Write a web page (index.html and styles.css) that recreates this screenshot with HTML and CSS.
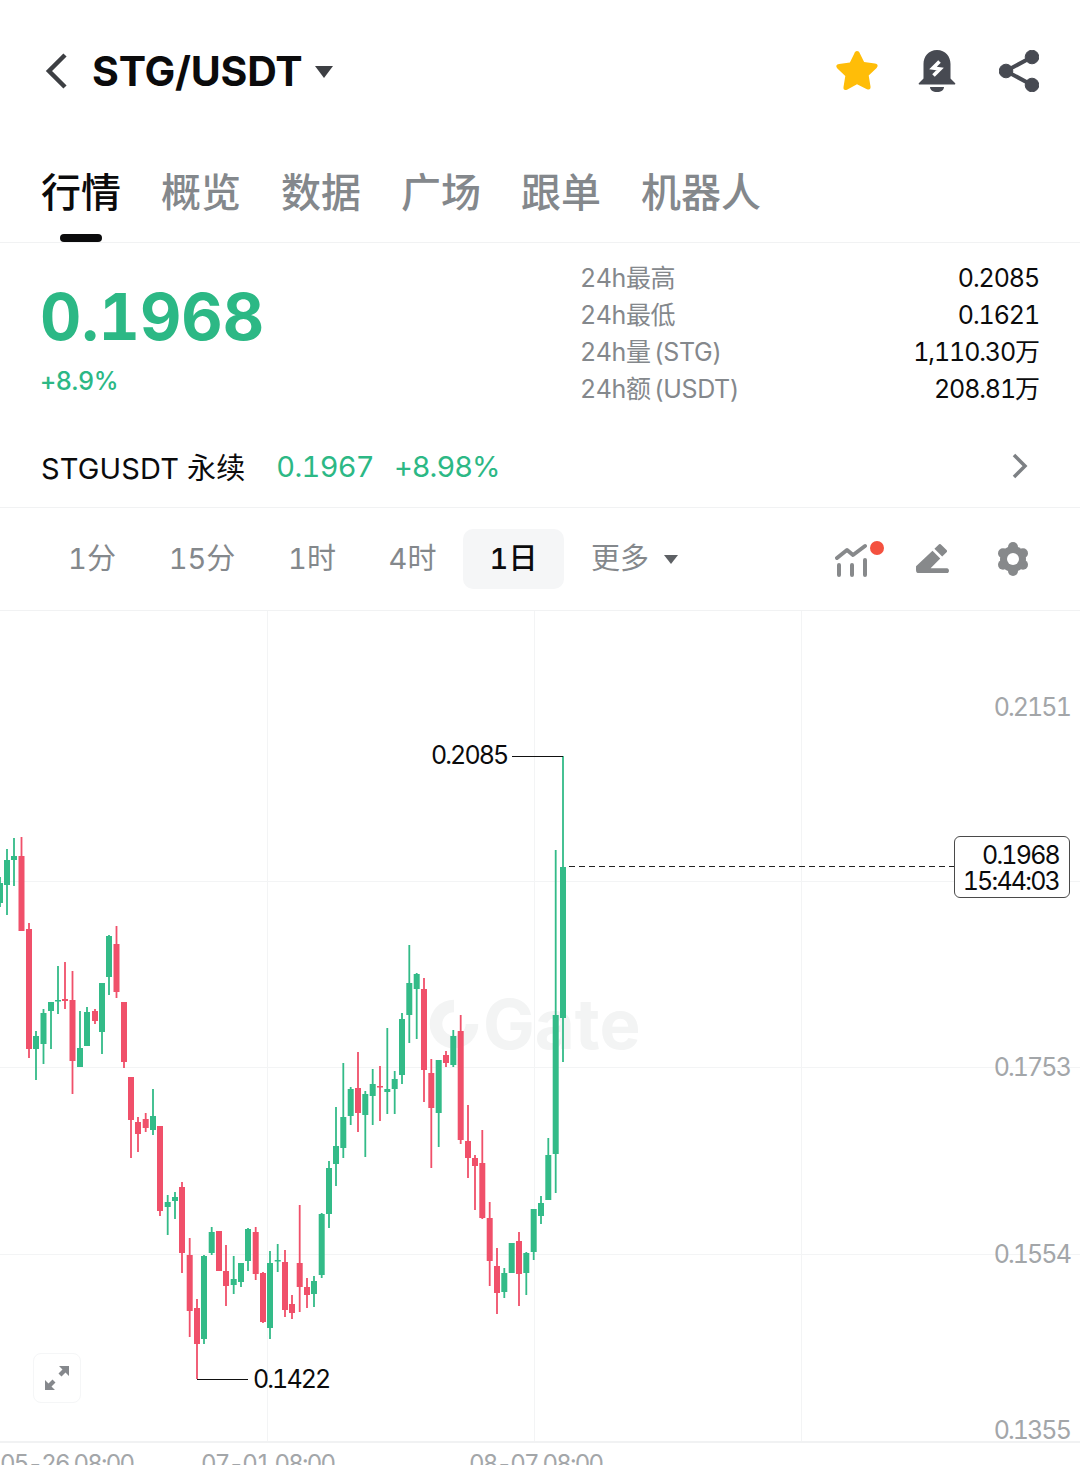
FILE: index.html
```html
<!DOCTYPE html>
<html lang="zh">
<head>
<meta charset="utf-8">
<title>STG/USDT</title>
<link rel="stylesheet" href="styles.css">
</head>
<body>
<div class="page">
  <header class="topbar">
    <div class="pair">
      <svg class="back" viewBox="0 0 24 38"><path d="M21 3 5 19l16 16" /></svg>
      <h1 class="pair-name">STG/USDT</h1>
      <svg class="pair-caret" viewBox="0 0 20 14"><path d="M1 1h18L10 13z"/></svg>
    </div>
    <div class="top-icons">
      <svg class="ic-star" viewBox="0 0 44 42"><path d="M22 1c1.400 0 2.200.9 2.800 2.200l4.300 8.800 10.800 1.600c2.800.4 3.600 2.400 1.700 4.300l-7.900 7.700 1.800 11c.4 2.600-1.300 3.700-3.500 2.600L22 34.300l-10 5.400c-2.200 1.100-3.900 0-3.500-2.600l1.800-11-7.900-7.700c-1.900-1.900-1.100-3.900 1.700-4.300l10.800-1.600 4.300-8.800C19.800 1.900 20.600 1 22 1z"/></svg>
      <svg class="ic-bell" viewBox="0 0 38 42"><path d="M19 0c8.500 0 13.500 6.500 13.500 14v14.500L37 33c.7.800.3 1.500-.7 1.500H1.700c-1 0-1.400-.7-.7-1.500l4.500-4.500V14C5.500 6.500 10.500 0 19 0z"/><path class="bolt" d="M21.500 11.500 15 18l7 1-6.500 6.500"/><path d="M12 37h14c0 3-3 5-7 5s-7-2-7-5z"/></svg>
      <svg class="ic-share" viewBox="0 0 40 42"><circle cx="33" cy="7" r="6.800"/><circle cx="7" cy="21" r="6.800"/><circle cx="33" cy="35" r="6.800"/><path d="M33 7 7 21l26 14" fill="none" stroke-width="4"/></svg>
    </div>
  </header>

  <nav class="tabs">
    <a class="tab active">行情</a>
    <a class="tab">概览</a>
    <a class="tab">数据</a>
    <a class="tab">广场</a>
    <a class="tab">跟单</a>
    <a class="tab">机器人</a>
  </nav>

  <section class="ticker">
    <div class="ticker-main">
      <div class="last-price">0.1968</div>
      <div class="last-change">+8.9%</div>
    </div>
    <dl class="stats">
      <div class="stat"><dt>24h最高</dt><dd>0.2085</dd></div>
      <div class="stat"><dt>24h最低</dt><dd>0.1621</dd></div>
      <div class="stat"><dt>24h量 (STG)</dt><dd>1,110.30万</dd></div>
      <div class="stat"><dt>24h额 (USDT)</dt><dd>208.81万</dd></div>
    </dl>
  </section>

  <section class="perp">
    <span class="perp-name">STGUSDT 永续</span>
    <span class="perp-price">0.1967</span>
    <span class="perp-change">+8.98%</span>
    <svg class="perp-arrow" viewBox="0 0 16 26"><path d="M2 2l11 11L2 24"/></svg>
  </section>

  <section class="toolbar">
    <div class="periods">
      <span class="period p1">1分</span>
      <span class="period p2">15分</span>
      <span class="period p3">1时</span>
      <span class="period p4">4时</span>
      <span class="period selected">1日</span>
      <span class="period more">更多<svg class="more-caret" viewBox="0 0 14 9"><path d="M0 0h14L7 9z"/></svg></span>
    </div>
    <div class="tools">
      <svg class="tool-ind" viewBox="0 0 50 36"><g fill="none" stroke="#87898b" stroke-width="4" stroke-linecap="round" stroke-linejoin="round"><path d="M2 17l10-8 6 5 12-9"/><path d="M4 24v10M17 24v10M30 19v15"/></g><circle cx="42" cy="7" r="7" fill="#f4513f"/></svg>
      <svg class="tool-pen" viewBox="0 0 34 32"><path fill="#87898b" d="M0 23 17 7l8 8-10 10h17c1 0 2 1 2 2.500S33 30 32 30H3c-2 0-3-1-3-3zM19 5l4.500-4.500c.7-.7 1.500-.7 2.200 0l5.800 5.800c.7.700.7 1.500 0 2.200L27 13z"/></svg>
      <svg class="tool-gear" viewBox="0 0 32 34"><g fill="#87898b"><circle cx="16" cy="17" r="13"/><circle cx="16" cy="5" r="5"/><circle cx="16" cy="29" r="5"/><circle cx="26" cy="11.200" r="5"/><circle cx="26" cy="22.800" r="5"/><circle cx="6" cy="11.200" r="5"/><circle cx="6" cy="22.800" r="5"/></g><circle cx="16" cy="17" r="6" fill="#fff"/></svg>
    </div>
  </section>

  <section class="chart">
    <div class="watermark"><svg class="wm-logo" viewBox="0 0 60 60"><path d="M30 3a27 27 0 1 0 27 27H43a13 13 0 1 1-13-13z"/></svg><span>Gate</span></div>
    <svg class="chart-svg" viewBox="0 0 1080 830" width="1080" height="830">
      <g transform="translate(0 -611)">
        <path class="grid" d="M267.500 611V1441M534.500 611V1441M801.500 611V1441M0 881.500H1080M0 1067.500H1080M0 1254.500H1080"/>
        <path class="wick green" d="M0 877V907M7 849V915M14 838V886M36 1031V1080M43.500 1009V1064M51 1002V1049M58 966V1014M80 1011V1067M87 1007V1046M102 983V1054M109 935V995M153 1089V1135M167.700 1195V1235M175 1192V1219M204 1255V1344M211.700 1227V1255M233.700 1256V1294M241 1263V1287M248 1228V1271M270 1251V1339M277.700 1244V1272M314 1276V1307M321.700 1213V1278M329 1161V1228M336 1107V1186M343.300 1063V1158M350.700 1087V1125M365.300 1091V1157M372.700 1069V1125M387.300 1028V1114M394.700 1071V1114M402 1013V1084M409.300 945V1043M416.700 973V1039M438.700 1060V1147M453.300 1030V1067M504.300 1268V1298M511.700 1243V1273M526.300 1252V1295M533.700 1209V1260M541 1196V1224M548.300 1138V1200M555.700 850V1193M563 756V1062"/>
        <path class="body green" d="M0 883V903M7 860V885M14 856V860M36 1036V1049M43.500 1013V1044M51 1002V1011M58 1000V1001.500M80 1048V1067M87 1012V1046M102 983V1032M109 936V977M153 1116V1130M167.700 1202V1207M175 1197V1201M204 1256V1339M211.700 1232V1253M233.700 1279V1285M241 1263V1282M248 1229V1261M270 1263V1328M277.700 1260V1261.500M314 1281V1294M321.700 1214V1275M329 1168V1214M336 1146V1164M343.300 1117V1148M350.700 1089V1116M365.300 1094V1115M372.700 1084V1096M387.300 1089V1092M394.700 1079V1089M402 1019V1075M409.300 983V1015M416.700 974V989M438.700 1060V1113M453.300 1036V1065M504.300 1273V1292M511.700 1243V1273M526.300 1253V1273M533.700 1209V1252M541 1203V1216M548.300 1155V1200M555.700 1015V1154M563 867V1018"/>
        <path class="wick red" d="M21.500 837V931M29 923V1058M65 962V1009M72.500 971V1094M95 1009V1024M116.500 926V998M124 1002V1068M131 1077V1158M138 1117V1152M145.700 1113V1132M160 1126V1216M182 1182V1273M189.700 1238V1337M197 1299V1379M219 1231V1271M226 1245V1306M255.700 1227V1280M263 1272V1323M285 1250V1317M292 1295V1319M299.700 1205V1312M307 1278V1308M358 1052V1132M380 1066V1121M424 978V1102M431.300 1059V1168M446 1051V1067M460.700 1015V1144M468 1105V1178M475 1155V1210M482.300 1130V1219M489.700 1202V1286M497 1248V1314M519 1232V1306"/>
        <path class="body red" d="M21.500 856V931M29 929V1049M65 999V1001M72.500 1000V1061M95 1011V1021M116.500 944V992M124 1002V1062M131 1077V1120M138 1122V1134M145.700 1119V1128M160 1126V1211M182 1187V1253M189.700 1255V1311M197 1308V1344M219 1231V1271M226 1271V1286M255.700 1232V1274M263 1273V1322M285 1262V1310M292 1304V1313M299.700 1263V1287M307 1287V1295M358 1088V1113M380 1086V1087.500M424 989V1070M431.300 1073V1108M446 1055V1063M460.700 1031V1140M468 1141V1158M475 1158V1166M482.300 1163V1218M489.700 1218V1261M497 1266V1293M519 1241V1274"/>
        <path class="leader" d="M512 756.500H563M197 1379.500H248"/>
        <path class="price-line" d="M569 866.500H954"/>
      </g>
    </svg>
    <span class="mark mark-high">0.2085</span>
    <span class="mark mark-low">0.1422</span>
    <span class="axis y1">0.2151</span>
    <span class="axis y2">0.1753</span>
    <span class="axis y3">0.1554</span>
    <span class="axis y4">0.1355</span>
    <div class="last-tag"><div>0.1968</div><div>15:44:03</div></div>
    <button class="expand"><svg viewBox="0 0 24 24"><path d="M14 0h10v10l-3.500-3.500-4 4-3-3 4-4zM10 24H0V14l3.500 3.500 4-4 3 3-4 4z"/></svg></button>
    <div class="time-axis">
      <span class="t1">05-26 08:00</span>
      <span class="t2">07-01 08:00</span>
      <span class="t3">08-07 08:00</span>
    </div>
  </section>
</div>
</body>
</html>
```
FILE: styles.css
```css
* { box-sizing: border-box; }
html, body { margin: 0; padding: 0; background: #fff; }
body {
  font-family: Inter, "Noto Sans CJK SC", sans-serif;
  font-variant-numeric: tabular-nums;
  color: #0b0b0c;
}
.page { width: 1080px; height: 1465px; overflow: hidden; }

.topbar {
  height: 140px;
  padding: 50px 41px 0 44px;
  display: flex;
  justify-content: space-between;
  align-items: flex-start;
}
.pair { display: flex; align-items: center; height: 42px; }
.back { width: 24px; height: 38px; fill: none; stroke: #3d3f43; stroke-width: 4.500; }
.pair-name {
  margin: 0 0 0 24px;
  font-size: 41px;
  line-height: 42px;
  font-weight: 700;
  letter-spacing: -.2px;
}
.pair-caret { width: 20px; height: 14px; margin-left: 11px; margin-top: 2px; fill: #3d3f43; }
.top-icons { display: flex; align-items: center; gap: 41px; height: 42px; }
.ic-star { width: 44px; height: 42px; fill: #ffbd08; transform: translateX(2px); }
.ic-bell { width: 38px; height: 42px; fill: #474a52; margin-right: 2px; }
.ic-share { width: 40px; height: 42px; fill: #474a52; stroke: #474a52; }
.bolt { fill: none; stroke: #fff; stroke-width: 3.600; }

.tabs {
  height: 103px;
  padding-left: 41px;
  display: flex;
  gap: 40px;
  border-bottom: 1px solid #f1f2f3;
}
.tab {
  position: relative;
  font-size: 40px;
  line-height: 105px;
  height: 102px;
  font-weight: 500;
  color: #84888c;
}
.tab.active { color: #0b0b0c; }
.tab.active::after {
  content: "";
  position: absolute;
  left: 19px;
  top: 94px;
  width: 42px;
  height: 8px;
  border-radius: 4px;
  background: #0b0b0c;
}

.ticker {
  height: 183px;
  padding: 17px 41px 0;
  display: flex;
  justify-content: space-between;
}
.last-price {
  font-size: 64px;
  line-height: 70px;
  font-weight: 700;
  color: #2cb885;
  letter-spacing: 0;
  margin: 22px 0 0 -1px;
}
.last-change { font-size: 25px; line-height: 30px; font-weight: 500; color: #2cb885; margin: 14px 0 0 -1px; letter-spacing: -.4px; }
.stats { margin: 0; width: 459px; }
.stat { display: flex; justify-content: space-between; height: 37px; align-items: baseline; font-size: 25px; line-height: 37px; }
.stat dt { color: #84888c; letter-spacing: -.4px; word-spacing: -3px; }
.stat dd { margin: 0; color: #0b0b0c; letter-spacing: -1.100px; }

.perp {
  height: 82px;
  padding: 0 52px 1px 41px;
  display: flex;
  align-items: center;
  font-size: 29px;
  border-bottom: 1px solid #f1f2f3;
}
.perp-name { color: #0b0b0c; letter-spacing: .15px; }
.perp-price { margin-left: 31px; color: #2cb885; font-size: 29px; letter-spacing: -.7px; }
.perp-change { margin-left: 20px; color: #2cb885; font-size: 29px; letter-spacing: -1px; }
.perp-arrow { width: 16px; height: 26px; margin-left: auto; fill: none; stroke: #7d8084; stroke-width: 3.500; }

.toolbar {
  height: 103px;
  padding: 0 51px 0 42px;
  display: flex;
  align-items: center;
  justify-content: space-between;
  border-bottom: 1px solid #f1f2f3;
}
.periods { display: flex; align-items: center; }
.period {
  height: 60px;
  line-height: 60px;
  font-size: 29px;
  color: #84888c;
  text-align: center;
}
.p1 { width: 100px; }
.p2 { width: 120px; }
.p3 { width: 100px; }
.p4 { width: 101px; }
.selected { width: 101px; border-radius: 10px; background: #f5f6f7; color: #0b0b0c; font-weight: 500; }
.more { margin-left: 27px; display: flex; align-items: center; }
.more-caret { width: 14px; height: 9px; margin-left: 15px; fill: #5d6064; }
.tools { display: flex; align-items: center; }
.tool-ind { width: 50px; height: 36px; margin-right: 31px; }
.tool-pen { width: 33px; height: 31px; margin-right: 48px; }
.tool-gear { width: 32px; height: 34px; }

.chart { position: relative; height: 854px; }
.chart-svg { display: block; position: relative; }
.grid { stroke: #f3f4f5; stroke-width: 1; fill: none; }
.wick { fill: none; stroke-width: 1.800; }
.body { fill: none; stroke-width: 6; }
.green { stroke: #33bb88; }
.red { stroke: #f0506a; }
.leader { stroke: #111; stroke-width: 1; fill: none; }
.price-line { stroke: #222; stroke-width: 1; stroke-dasharray: 6 4; fill: none; }
.watermark {
  position: absolute;
  left: 427px;
  top: 375px;
  display: flex;
  align-items: center;
  gap: 2px;
  font-size: 69px;
  line-height: 76px;
  font-weight: 700;
  color: #f3f4f4;
}
.wm-logo { width: 54px; height: 54px; fill: #f3f4f4; }
.mark { position: absolute; font-size: 25px; line-height: 30px; color: #0b0b0c; letter-spacing: -1.900px; }
.mark-high { left: 431px; top: 129px; }
.mark-low { left: 253px; top: 753px; }
.axis { position: absolute; right: 10px; font-size: 25px; line-height: 30px; color: #a3a6a9; letter-spacing: -1.900px; }
.y1 { top: 81px; }
.y2 { top: 441px; }
.y3 { top: 628px; }
.y4 { top: 804px; }
.last-tag {
  position: absolute;
  left: 954px;
  top: 225px;
  width: 116px;
  height: 62px;
  border: 1px solid #4a4a4a;
  border-radius: 6px;
  background: #fff;
  font-size: 25px;
  line-height: 26px;
  text-align: right;
  padding: 5px 10px 0 0;
  color: #0b0b0c;
  letter-spacing: -1.800px;
}
.expand {
  position: absolute;
  left: 33px;
  top: 742px;
  width: 48px;
  height: 50px;
  padding: 0;
  border: 1px solid #f5f6f7;
  border-radius: 8px;
  background: #fff;
  display: flex;
  align-items: center;
  justify-content: center;
}
.expand svg { width: 24px; height: 24px; fill: #85888c; }
.time-axis { height: 24px; position: relative; border-top: 2px solid #f1f2f3; }
.time-axis span { position: absolute; top: 6px; font-size: 24px; line-height: 30px; color: #a3a6a9; letter-spacing: -1.800px; }
.t1 { left: 0; }
.t2 { left: 201px; }
.t3 { left: 469px; }
```
